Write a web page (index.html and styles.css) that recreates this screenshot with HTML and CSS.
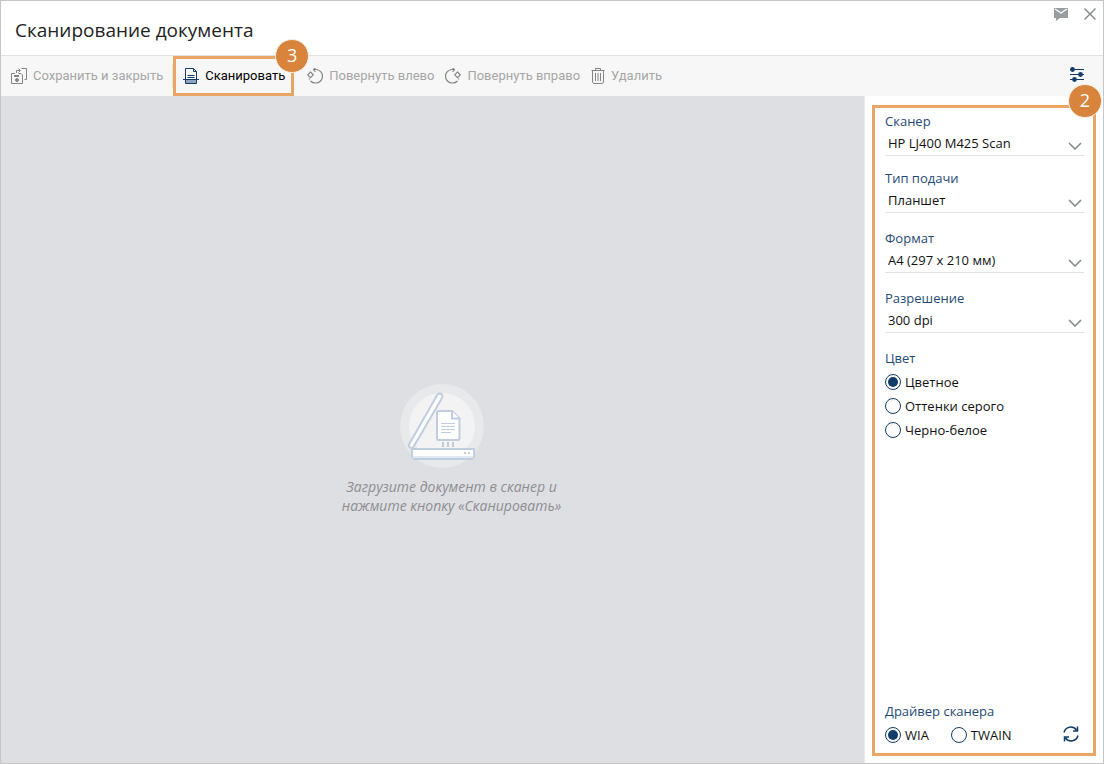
FILE: index.html
```html
<!DOCTYPE html>
<html lang="ru">
<head>
<meta charset="utf-8">
<meta name="viewport" content="width=device-width, initial-scale=1">
<title>Сканирование документа</title>
<link rel="stylesheet" href="styles.css">
</head>
<body>
<div class="window">
  <header class="header">
    <h1 class="title">Сканирование документа</h1>
    <div class="window-actions">
      <button class="icon-button" type="button" aria-label="Сообщение">
        <svg width="14" height="14" viewBox="0 0 14 14"><path d="M0 1H14V11H6L2 14V11H0Z" fill="#9a9da0"/><path d="M1 2L7 6L13 2" fill="none" stroke="#fff" stroke-width="1.2"/></svg>
      </button>
      <button class="icon-button" type="button" aria-label="Закрыть">
        <svg width="12" height="12" viewBox="0 0 12 12"><path d="M.5 .5L11.500 11.500M11.500 .5L.5 11.500" fill="none" stroke="#7e868c" stroke-width="1.400"/></svg>
      </button>
    </div>
  </header>

  <div class="toolbar">
    <button class="tool tool-save" type="button" disabled>
      <svg width="17" height="17" viewBox="0 0 17 17" fill="none" stroke="#858585"><path d="M5.500 5V2.500H9M7.500 .5L9.500 2.500L7.500 4.500M10.500 .5H15.500V11.500H13.500"/><path d="M4 5.500H.5V15.500H11.500V7L10 5.500H7.500"/><path d="M3 8H8" stroke-width="2"/><circle cx="6" cy="12" r="1.500" fill="#858585"/></svg>
      <span>Сохранить и закрыть</span>
    </button>
    <span class="separator"></span>
    <div class="scan-mark">
      <button class="tool tool-scan" type="button">
        <svg width="16" height="17" viewBox="0 0 16 17" fill="none" stroke="#123c6a"><path d="M2.500 12H13.500V15.500H2.500Z" fill="#8fa5bf" stroke="none"/><path d="M2.500 11V.5H10.500L13.500 3.500V11M10.500 .5V3.500H13.500M4.500 7.500H11.500M4.500 9.500H11.500M2.500 12V15.500H13.500V12"/><path d="M0 11.500H16"/></svg>
        <span>Сканировать</span>
      </button>
      <span class="badge">3</span>
    </div>
    <button class="tool tool-left" type="button" disabled>
      <svg width="16" height="16" viewBox="0 0 16 16" fill="none" stroke="#858585" stroke-width="1.200"><path d="M7 1.500H9A6.700 6.700 0 0 1 8.500 15A6.700 6.700 0 0 1 3.500 13M2.500 11.500L2 10.500M8.500 0L6.500 1.500L8.500 4M3.500 4L6.300 6.800L3.500 9.600L.7 6.800Z"/></svg>
      <span>Повернуть влево</span>
    </button>
    <button class="tool" type="button" disabled>
      <svg width="16" height="16" viewBox="0 0 16 16" fill="none" stroke="#858585" stroke-width="1.200"><path d="M9 1.500H7A6.700 6.700 0 0 0 7.500 15A6.700 6.700 0 0 0 12.500 13M13.500 11.500L14 10.500M7.500 0L9.500 1.500L7.500 4M12.500 4L15.300 6.800L12.500 9.600L9.700 6.800Z"/></svg>
      <span>Повернуть вправо</span>
    </button>
    <button class="tool" type="button" disabled>
      <svg width="14" height="16" viewBox="0 0 14 16" fill="none" stroke="#858585"><path d="M.5 2.500H13.500M4.500 2V.5H9.500V2M1.500 2.500V14L2.500 15.500H11.500L12.500 14V2.500M4.500 5V13M7 5V13M9.500 5V13"/></svg>
      <span>Удалить</span>
    </button>
    <button class="icon-button settings" type="button" aria-label="Настройки сканирования">
      <svg width="14" height="15" viewBox="0 0 14 15" stroke="#123c6a" stroke-width="1.200" fill="#123c6a"><path d="M0 2.500H14M0 7.500H14M0 12.500H14"/><circle cx="2.500" cy="2.500" r="1.800"/><circle cx="10.500" cy="7.500" r="1.800"/><circle cx="4.500" cy="12.500" r="1.800"/></svg>
    </button>
  </div>

  <div class="content">
    <main class="canvas">
      <div class="empty">
        <svg class="empty-icon" width="84" height="84" viewBox="0 0 84 84">
          <circle cx="42" cy="42" r="42" fill="#e8e9eb"/><circle cx="42" cy="42" r="33" fill="#f3f3f4"/>
          <g fill="#fff" stroke="#bfcde0" stroke-width="2" stroke-linejoin="round" stroke-linecap="round">
            <path d="M37.500 10.500Q40 8.500 42 10.500Q43 12 42 14L14 62Q12 65 10 63.500Q8 62 9.500 59.500Z"/>
            <path d="M37 28.500Q37 27 38.500 27H52L59.500 34.500V54.500Q59.500 56 58 56H38.500Q37 56 37 54.500Z"/>
            <path d="M52 27V34.500H59.500"/>
            <path d="M12 65H74V73L72 75H14L12 73Z"/>
          </g>
          <path d="M13 73H73" stroke="#e0e8f0" stroke-width="2"/>
          <path d="M41 39.500H55M41 42.500H55M41 45.500H55M41 48.500H51" stroke="#bfcde0"/>
          <path d="M43 58V63M48 58V63M53 58V63M64 69H66M68 69H70" stroke="#bfcde0" stroke-width="2"/>
        </svg>
        <p class="hint">Загрузите документ в сканер и<br>нажмите кнопку «Сканировать»</p>
      </div>
    </main>

    <aside class="sidebar">
      <span class="badge">2</span>
      <form class="settings-form">
        <div class="field">
          <label class="label" for="scanner">Сканер</label>
          <select class="select" id="scanner"><option>HP LJ400 M425 Scan</option></select>
          <svg class="chevron" width="14" height="8" viewBox="0 0 14 8"><path d="M1 1L7 7L13 1"/></svg>
        </div>
        <div class="field">
          <label class="label" for="feed">Тип подачи</label>
          <select class="select" id="feed"><option>Планшет</option></select>
          <svg class="chevron" width="14" height="8" viewBox="0 0 14 8"><path d="M1 1L7 7L13 1"/></svg>
        </div>
        <div class="field">
          <label class="label" for="format">Формат</label>
          <select class="select" id="format"><option>A4 (297 x 210 мм)</option></select>
          <svg class="chevron" width="14" height="8" viewBox="0 0 14 8"><path d="M1 1L7 7L13 1"/></svg>
        </div>
        <div class="field">
          <label class="label" for="resolution">Разрешение</label>
          <select class="select" id="resolution"><option>300 dpi</option></select>
          <svg class="chevron" width="14" height="8" viewBox="0 0 14 8"><path d="M1 1L7 7L13 1"/></svg>
        </div>
        <fieldset class="group">
          <legend class="label">Цвет</legend>
          <label class="option"><input class="radio" type="radio" name="color" checked>Цветное</label>
          <label class="option"><input class="radio" type="radio" name="color">Оттенки серого</label>
          <label class="option"><input class="radio" type="radio" name="color">Черно-белое</label>
        </fieldset>
        <fieldset class="group driver">
          <legend class="label">Драйвер сканера</legend>
          <div class="driver-row">
            <label class="option"><input class="radio" type="radio" name="driver" checked>WIA</label>
            <label class="option"><input class="radio" type="radio" name="driver">TWAIN</label>
            <button class="icon-button refresh" type="button" aria-label="Обновить">
              <svg width="16" height="16" viewBox="0 0 16 16" fill="none" stroke="#123c6a" stroke-width="1.500"><path d="M1 6.500A7 7 0 0 1 13.500 4M14.500 .5V5H10M15 9.500A7 7 0 0 1 2.500 12M1.500 15.500V11H6"/></svg>
            </button>
          </div>
        </fieldset>
      </form>
    </aside>
  </div>
</div>
</body>
</html>
```
FILE: styles.css
```css
* { box-sizing: border-box; }

body {
  margin: 0;
  font-family: "Open Sans", "Noto Sans", sans-serif;
  font-size: 13px;
  color: #111;
}

.window {
  display: flex;
  flex-direction: column;
  min-height: 100vh;
  border: 1px solid #c6c6c6;
  background: #fff;
}

.header {
  display: flex;
  justify-content: space-between;
  height: 55px;
  padding: 0 7px 0 14px;
  border-bottom: 1px solid #e2e2e3;
}

.title {
  margin: 0;
  padding-top: 4px;
  align-self: center;
  font-size: 19px;
  line-height: 28px;
  font-weight: 400;
  color: #222;
}

.window-actions {
  display: flex;
  align-items: center;
  align-self: flex-start;
  gap: 16px;
  padding-top: 6px;
}

.icon-button,
.tool {
  padding: 0;
  border: 0;
  background: none;
}

.icon-button { display: flex; }

.toolbar {
  display: flex;
  align-items: center;
  height: 40px;
  padding-right: 19px;
  background: #f7f7f7;
}

.tool {
  display: flex;
  align-items: center;
  gap: 6px;
  margin-right: 11px;
  font-family: Roboto, "Liberation Sans", sans-serif;
  font-size: 13px;
  line-height: 20px;
  color: #000;
  white-space: nowrap;
}

.tool:disabled { color: #a6a6a6; }

.tool-save {
  gap: 5px;
  margin: 0 9px 0 10px;
}

.separator {
  width: 1px;
  height: 24px;
  background: #e2e2e3;
}

.scan-mark {
  position: relative;
  display: flex;
  align-items: center;
  height: 40px;
  padding: 0 6px 0 7px;
  border: 3px solid #e9a564;
}

.tool-scan { margin: 0; }

.tool-left { margin-left: 13px; }

.badge {
  position: absolute;
  z-index: 1;
  top: -20px;
  right: -18px;
  width: 34px;
  height: 34px;
  border: 1px solid #f8efe6;
  border-radius: 50%;
  background: #d8843c;
  color: #fff;
  font-size: 18px;
  line-height: 31px;
  text-align: center;
}

.settings {
  margin-left: auto;
  padding-bottom: 3px;
}

.content {
  display: flex;
  flex: 1;
}

.canvas {
  display: flex;
  flex: 1;
  align-items: center;
  justify-content: center;
  padding: 40px 0 0 38px;
  background: #dedfe3;
}

.empty {
  display: flex;
  flex-direction: column;
  align-items: center;
}

.empty-icon { margin-right: 20px; }

.hint {
  margin: 9px 0 0;
  font-size: 14px;
  font-style: italic;
  line-height: 19px;
  text-align: center;
  color: #8e8e90;
}

.sidebar {
  position: relative;
  display: flex;
  width: 239px;
  padding: 9px 7px 7px 7px;
  border-left: 1px solid #ebebed;
}

.sidebar .badge {
  top: -12px;
  right: 1px;
}

.settings-form {
  display: flex;
  flex: 1;
  flex-direction: column;
  gap: 15px;
  padding: 3px 9px 6px 10px;
  border: 3px solid #e9a564;
}

.field { display: grid; }

.field:first-child { margin-bottom: -3px; }

.label {
  padding: 0;
  font-size: 13px;
  line-height: 20px;
  color: #1f4a75;
}

.select,
.chevron { grid-area: 2 / 1; }

.select {
  width: 100%;
  height: 25px;
  padding: 0 24px 0 3px;
  border: 0;
  border-bottom: 1px solid #e2e2e4;
  background: none;
  appearance: none;
  font: inherit;
  color: #111;
}

.chevron {
  align-self: center;
  justify-self: end;
  margin: 4px 2px 0 0;
  fill: none;
  stroke: #80878c;
  stroke-width: 1.5;
  pointer-events: none;
}

.group {
  display: flex;
  flex-direction: column;
  min-width: 0;
  margin: 0;
  padding: 2px 0 0;
  border: 0;
}

.option {
  display: flex;
  align-items: center;
  gap: 4px;
  height: 24px;
}

.radio {
  width: 16px;
  height: 16px;
  margin: 0;
  border: 1px solid #123c6a;
  border-radius: 50%;
  appearance: none;
  background: #fff;
}

.radio:checked {
  background: #123c6a;
  background-clip: content-box;
  padding: 2px;
}

.driver { margin-top: auto; }

.driver-row {
  display: flex;
  align-items: center;
  gap: 22px;
}

.refresh { margin: 0 5px 2px auto; }
```
